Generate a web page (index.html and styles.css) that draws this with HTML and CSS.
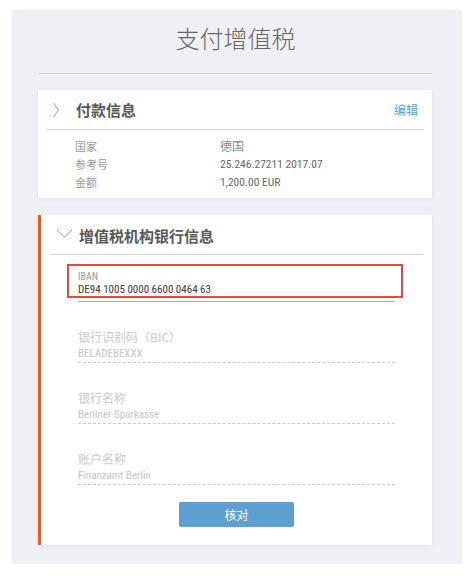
FILE: index.html
```html
<!DOCTYPE html>
<html lang="zh-CN">
<head>
<meta charset="utf-8">
<title>支付增值税</title>
<link rel="stylesheet" href="styles.css">
</head>
<body>
<div class="panel">
  <h1 class="page-title">支付增值税</h1>

  <section class="card">
    <div class="card-head">
      <svg class="chev-right" width="8" height="16" viewBox="0 0 8 16"><polyline points="1.5,1 6.5,8 1.5,15" fill="none" stroke="#9a9a9a" stroke-width="1"/></svg>
      <h2 class="card-title">付款信息</h2>
      <a class="edit">编辑</a>
    </div>
    <div class="rows">
      <div class="row"><span class="k">国家</span><span class="v v-cjk">德国</span></div>
      <div class="row"><span class="k">参考号</span><span class="v">25.246.27211 2017.07</span></div>
      <div class="row"><span class="k">金额</span><span class="v">1,200.00 EUR</span></div>
    </div>
  </section>

  <section class="card card-active">
    <div class="card-head head2">
      <svg class="chev-down" width="17" height="9" viewBox="0 0 17 9"><polyline points="1,1 8.5,8 16,1" fill="none" stroke="#9a9a9a" stroke-width="1"/></svg>
      <h2 class="card-title">增值税机构银行信息</h2>
    </div>
    <div class="fields">
      <div class="field-focus">
        <div class="f-label-small">IBAN</div>
        <div class="f-value-dark">DE94 1005 0000 6600 0464 63</div>
      </div>
      <div class="underline-solid"></div>

      <div class="field">
        <div class="f-label">银行识别码（BIC）</div>
        <div class="f-value">BELADEBEXXX</div>
        <div class="underline-dash"></div>
      </div>
      <div class="field">
        <div class="f-label">银行名称</div>
        <div class="f-value">Berliner Sparkasse</div>
        <div class="underline-dash"></div>
      </div>
      <div class="field">
        <div class="f-label">账户名称</div>
        <div class="f-value">Finanzamt Berlin</div>
        <div class="underline-dash"></div>
      </div>
    </div>
    <div class="actions">
      <button class="btn">核对</button>
    </div>
  </section>
</div>
</body>
</html>
```

FILE: styles.css
```css
* { box-sizing: border-box; }
html, body { margin: 0; padding: 0; background: #ffffff; }
body {
  font-family: "Roboto Condensed", "Liberation Sans Narrow", "DejaVu Sans Condensed", Roboto, "Noto Sans CJK SC", sans-serif;
  color: #555;
}
.panel {
  margin: 10px 13px 0 12px;
  width: 450px;
  height: 554px;
  background: #eff0f6;
  box-shadow: 0 0 2px rgba(0,0,0,0.06);
  padding: 0 30px 0 26px;
}
.page-title {
  margin: 0 0 0 1px;
  padding: 15px 0 23px;
  font-family: "Noto Sans CJK SC", sans-serif;
  font-weight: 300;
  font-size: 24px;
  line-height: 25px;
  color: #666;
  text-align: center;
  border-bottom: 1px solid #cfd0d6;
}
.card {
  margin-top: 16px;
  background: #fff;
  box-shadow: 0 1px 4px rgba(0,0,0,0.07);
}
.card-head {
  height: 40px;
  margin: 0 8px 0 9px;
  border-bottom: 1px solid #cfcfd4;
  display: flex;
  align-items: center;
  padding: 0 6px 0 5px;
}
.chev-right { margin-right: 16px; margin-top: 1px; }
.card-title {
  margin: 0;
  font-family: "Noto Sans CJK SC", sans-serif;
  font-size: 15px;
  font-weight: 700;
  color: #585858;
  flex: 1;
}
.edit {
  font-family: "Noto Sans CJK SC", sans-serif;
  font-size: 12px;
  color: #5b9fd0;
}
.rows { padding: 7px 0 7px 37px; }
.row { display: flex; line-height: 18px; }
.k {
  width: 145px;
  font-family: "Noto Sans CJK SC", sans-serif;
  font-size: 11px;
  color: #9a9a9a;
}
.v { font-size: 11.5px; color: #666; }
.v-cjk { font-family: "Noto Sans CJK SC", sans-serif; font-size: 12px; font-weight: 300; color: #555; }

.card-active {
  border-left: 3px solid #e8582a;
  margin-top: 17px;
  padding-bottom: 18px;
}
.head2 { margin: 0 9px 0 9px; padding-left: 6px; }
.chev-down { margin-right: 6px; margin-top: -3px; }
.head2 .card-title { padding-top: 2px; }
.fields { padding: 0 37px; margin-top: 9px; }
.field-focus {
  border: 2px solid #e0474b;
  margin: 0 -8px 0 -11px;
  padding: 5px 0 0 9px;
  height: 34px;
}
.f-label-small { font-size: 10px; line-height: 12px; color: #9a9a9a; }
.f-value-dark { font-size: 11px; line-height: 13px; color: #3a3a3a; }
.underline-solid { margin-top: 3px; border-top: 1px solid #a9abb2; }
.field { padding-top: 27px; }
.f-label {
  font-family: "Noto Sans CJK SC", sans-serif;
  font-size: 12px;
  line-height: 16px;
  color: #c8c8c8;
}
.f-value { margin-top: 2px; font-size: 11px; line-height: 14px; color: #c4c4c4; }
.underline-dash { margin-top: 1px; border-top: 1px dashed #c9c9c9; }
.actions { display: flex; justify-content: center; margin-top: 17px; }
.btn {
  width: 115px;
  height: 25px;
  border: none;
  border-radius: 2px;
  background: #5d9fd1;
  color: #fff;
  font-family: "Noto Sans CJK SC", sans-serif;
  font-size: 12px;
  padding: 0;
}
```
